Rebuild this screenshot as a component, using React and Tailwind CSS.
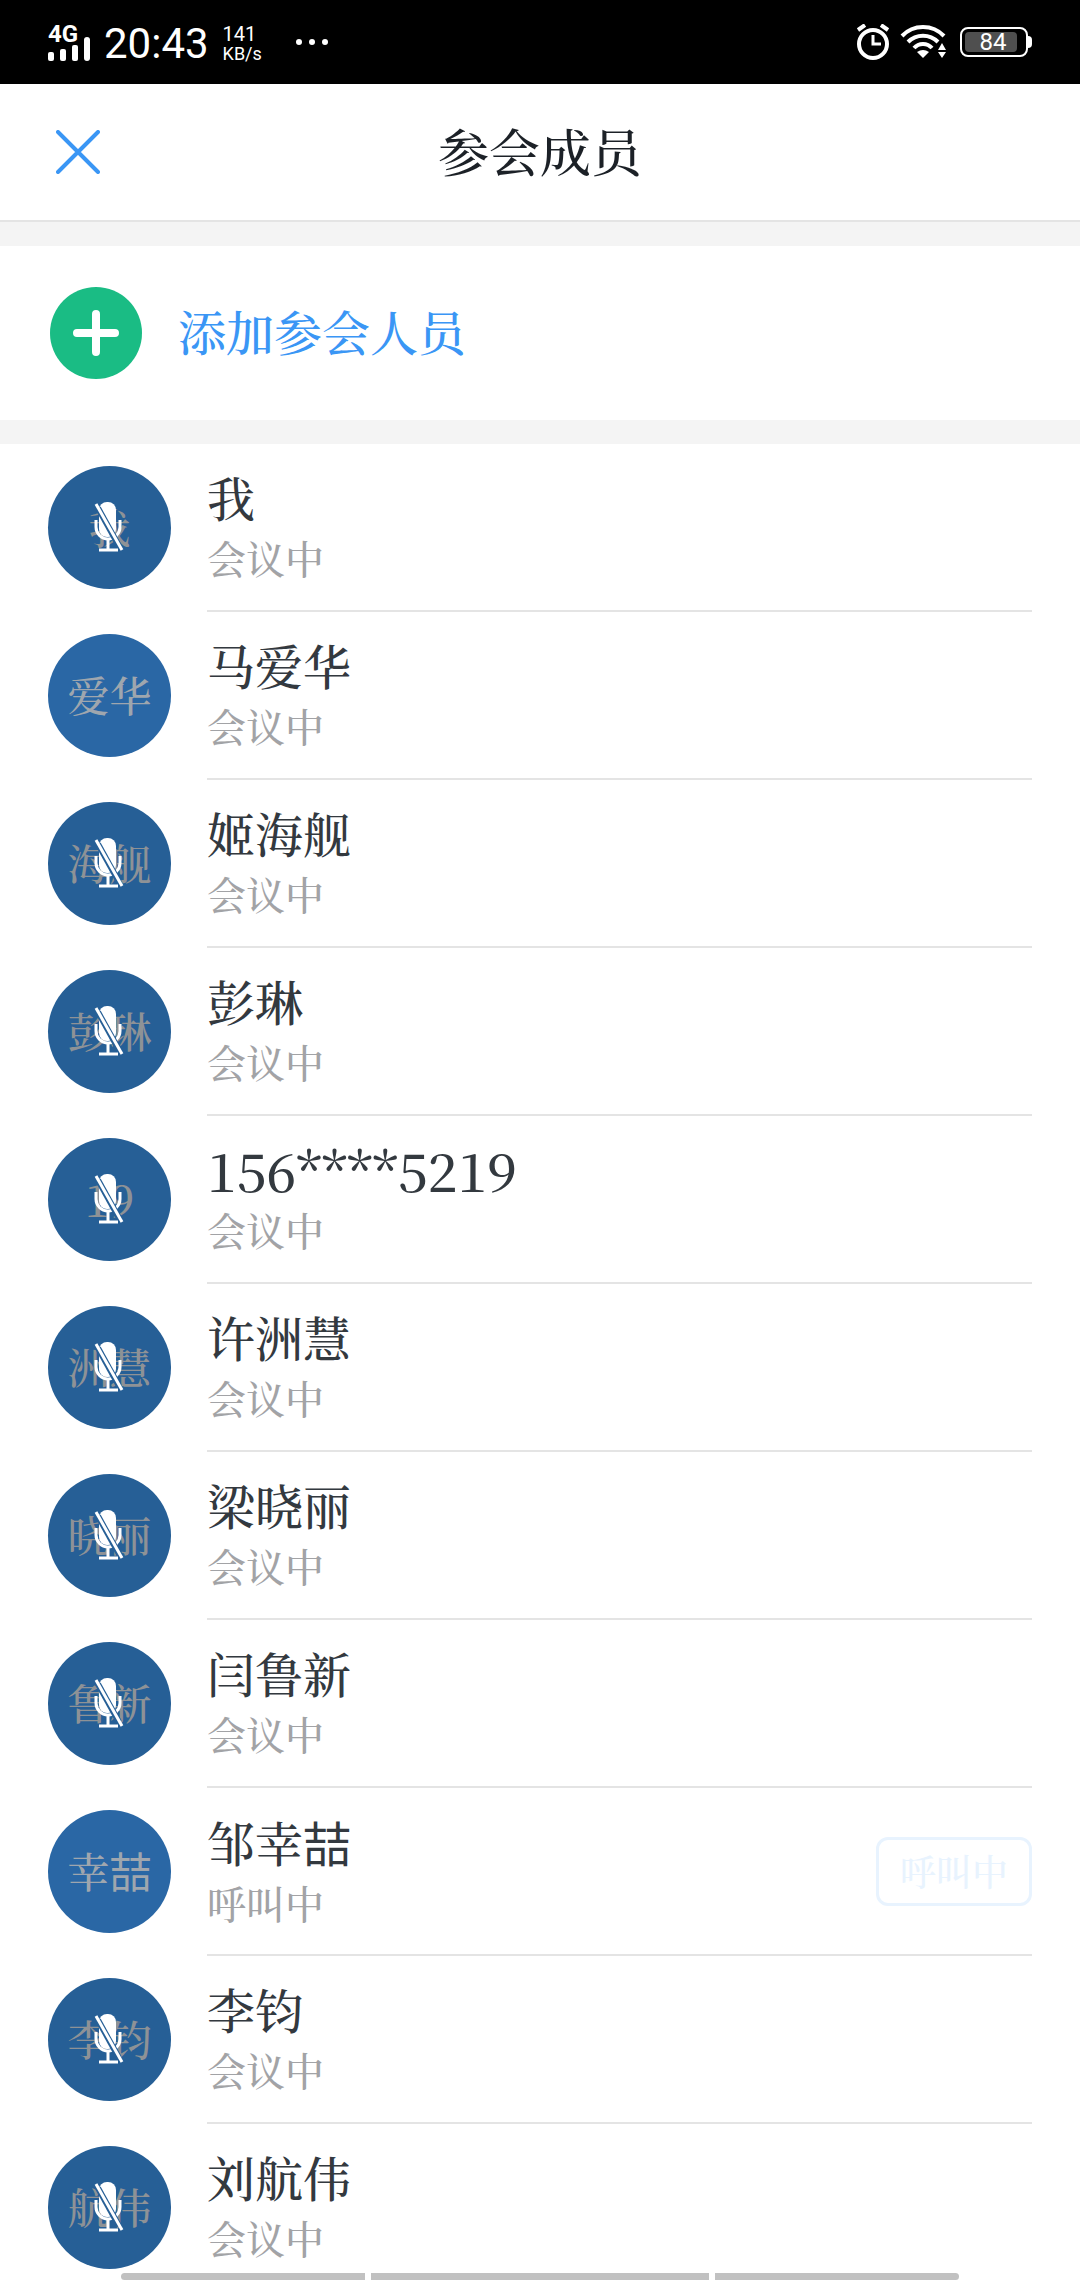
/**
 * App.jsx
 * Meeting participants screen: add-member entry plus the list of people
 * in the call, with mute state on each avatar.
 */
import React from 'react';

const members = [
    { name: '我', short: '我', status: '会议中', muted: true },
    { name: '马爱华', short: '爱华', status: '会议中', muted: false },
    { name: '姬海舰', short: '海舰', status: '会议中', muted: true },
    { name: '彭琳', short: '彭琳', status: '会议中', muted: true },
    { name: '156****5219', short: '19', status: '会议中', muted: true, phone: true },
    { name: '许洲慧', short: '洲慧', status: '会议中', muted: true },
    { name: '梁晓丽', short: '晓丽', status: '会议中', muted: true },
    { name: '闫鲁新', short: '鲁新', status: '会议中', muted: true },
    { name: '邹幸喆', short: '幸喆', status: '呼叫中', muted: false, calling: true },
    { name: '李钧', short: '李钧', status: '会议中', muted: true },
    { name: '刘航伟', short: '航伟', status: '会议中', muted: true }
];

// The rare character 喆 is set in the sans face, the rest in the serif one
const NameText = ({ text }) =>
    text.split(/(喆)/).map((part, i) =>
        part === '喆' ? (
            <span key={i} className="font-normal font-['Noto_Sans_CJK_SC',sans-serif]">{part}</span>
        ) : (
            part
        )
    );

// Microphone with a slash. The slash is edged in the avatar colour.
const MutedIcon = () => (
    <svg viewBox="0 0 30 50" className="absolute left-[46px] top-9 w-[30px] h-[50px]" fill="none" aria-hidden="true">
        <rect x="5" y="0" width="17" height="35" rx="8" fill="#fff" />
        <path d="M2 18v7a12 12 0 0 0 24 0v-7" stroke="#fff" strokeWidth="3" />
        <path d="M14 37v10M5 48h19" stroke="#fff" strokeWidth="3" />
        <path d="M4 6l21 38" stroke="#265f96" strokeWidth="6" />
        <path d="M2 2l26 46" stroke="#fff" strokeWidth="3" />
    </svg>
);

const StatusBar = () => (
    <div className="flex items-center justify-between h-[84px] shrink-0 px-12 bg-black text-white font-normal font-['Roboto',sans-serif]">
        <div className="flex items-center">
            <div className="flex h-[38px] w-[42px] items-end justify-between">
                <div className="flex flex-col">
                    <span className="text-2xl leading-[22px] font-bold">4G</span>
                    <svg viewBox="0 0 30 16" className="w-[30px] h-4" fill="#fff">
                        <rect x="0" y="7" width="6" height="9" rx="2" />
                        <rect x="12" y="4" width="6" height="12" rx="2" />
                        <rect x="24" y="0" width="6" height="16" rx="2" />
                    </svg>
                </div>
                <div className="h-6 w-[6px] rounded-sm bg-white" />
            </div>
            <span className="ml-[14px] pt-1 text-[42px] leading-[48px]">20:43</span>
            <div className="ml-[14px] flex flex-col pt-1">
                <span className="text-xl leading-5">141</span>
                <span className="text-lg leading-5">KB/s</span>
            </div>
            <svg viewBox="0 0 32 6" className="ml-[34px] w-8 h-[6px]" fill="#fff">
                <circle cx="3" cy="3" r="3" />
                <circle cx="16" cy="3" r="3" />
                <circle cx="29" cy="3" r="3" />
            </svg>
        </div>
        <div className="flex items-center">
            {/* Alarm */}
            <svg viewBox="0 0 34 36" className="w-[34px] h-9" fill="none" stroke="#fff">
                <circle cx="17" cy="20" r="14" strokeWidth="4" />
                <path d="M17 11v9h8" strokeWidth="3" />
                <path d="M2 6l7-5M32 6l-7-5" strokeWidth="4" />
            </svg>
            {/* Wifi */}
            <svg viewBox="0 0 46 34" className="ml-[10px] w-[46px] h-[34px]" fill="none" stroke="#fff" strokeWidth="4">
                <path d="M2 11a29 29 0 0 1 42 0" />
                <path d="M8 17a21 21 0 0 1 30 0" />
                <path d="M14 23a12 12 0 0 1 18 0" />
                <path d="M17 27q6-4 12 0l-6 6z" fill="#fff" stroke="none" />
                <path d="M42 18l4 7h-8zM42 33l4-6h-8z" fill="#fff" stroke="none" />
            </svg>
            {/* Battery */}
            <div className="ml-[14px] flex items-center">
                <div className="flex w-[68px] h-[30px] rounded-lg border-2 border-white p-[3px]">
                    <div className="w-[52px] rounded-sm bg-[#4f4f4f] pl-1 text-center text-2xl leading-5">84</div>
                </div>
                <div className="w-1 h-3 rounded-r-full bg-white" />
            </div>
        </div>
    </div>
);

const Member = ({ member }) => (
    <li className="flex h-[168px] shrink-0 px-12">
        <div
            className={`relative mt-[22px] mr-9 flex size-[123px] shrink-0 items-center justify-center rounded-full pb-1 leading-none ${
                member.phone ? 'text-[44px]' : 'text-[42px]'
            } ${member.muted ? 'bg-[#265f96] text-[#8e9296]' : 'bg-[#2a67a5] text-[#9fa6ae]'}`}
        >
            <span><NameText text={member.short} /></span>
            {member.muted && <MutedIcon />}
        </div>
        <div className="flex flex-1 items-center justify-between border-b-2 border-[#e4e4e4]">
            <div>
                <div className={`leading-[60px] text-[#33393f] ${member.phone ? 'text-[53px]' : 'text-[48px]'}`}>
                    <NameText text={member.name} />
                </div>
                <div className="text-[39px] leading-[60px] text-[#a2a3a6]">{member.status}</div>
            </div>
            {member.calling && (
                <button type="button" disabled className="h-[69px] w-[156px] rounded-xl border-3 border-[#e8f3fe] text-4xl leading-none text-[#e8f3fe]">
                    呼叫中
                </button>
            )}
        </div>
    </li>
);

export default function App() {
    return (
        <div className="relative flex h-screen flex-col overflow-hidden bg-white font-medium font-['Noto_Serif_CJK_SC','Noto_Sans_CJK_SC',serif]">
            <StatusBar />

            {/* Header */}
            <header className="grid h-[138px] shrink-0 grid-cols-[1fr_auto_1fr] items-center border-b-2 border-[#e4e4e4] px-14">
                <button type="button" aria-label="关闭" className="w-11">
                    <svg viewBox="0 0 44 44" className="size-11" stroke="#3a96f5" strokeWidth="4" strokeLinecap="round">
                        <path d="M2 2l40 40M42 2L2 42" />
                    </svg>
                </button>
                <h1 className="pb-1 text-[51px] leading-none text-[#1c2127]">参会成员</h1>
            </header>

            {/* Add members */}
            <div className="shrink-0 border-y-24 border-[#f4f4f4]">
                <button type="button" className="flex h-[174px] w-full items-center gap-9 pl-[50px] text-5xl text-[#3a96f5]">
                    <svg viewBox="0 0 92 92" className="size-[92px]">
                        <circle cx="46" cy="46" r="46" fill="#1abc84" />
                        <path d="M46 27v38M27 46h38" stroke="#fff" strokeWidth="8" strokeLinecap="round" />
                    </svg>
                    <span className="pb-1">添加参会人员</span>
                </button>
            </div>

            {/* Member list */}
            <ul className="flex min-h-0 flex-1 flex-col overflow-hidden">
                {members.map((member) => (
                    <Member key={member.name} member={member} />
                ))}
            </ul>

            {/* System gesture bar */}
            <div className="absolute inset-x-0 bottom-0 flex h-[7px] gap-[6px] px-[121px]">
                <div className="w-[244px] rounded-l-full bg-[#c1c1c1]" />
                <div className="flex-1 bg-[#c1c1c1]" />
                <div className="w-[244px] rounded-r-full bg-[#c1c1c1]" />
            </div>
        </div>
    );
}
